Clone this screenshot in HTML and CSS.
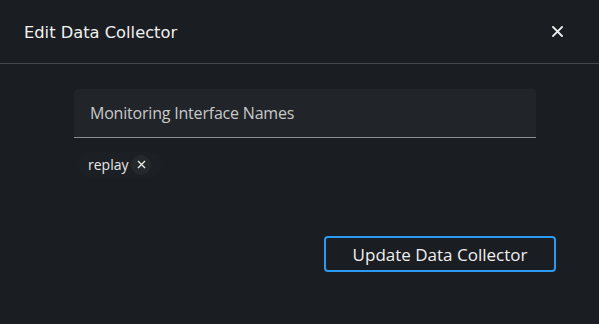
FILE: index.html
```html
<!DOCTYPE html>
<html>
<head>
<meta charset="utf-8">
<link rel="stylesheet" href="styles.css">
</head>
<body>
<div class="modal">
  <header class="modal-header">
    <h1 class="modal-title">Edit Data Collector</h1>
    <button class="close-btn" aria-label="Close">
      <svg width="11" height="11" viewBox="0 0 11 11"><path d="M1 1L10 10M10 1L1 10" stroke="#f0f0f0" stroke-width="1.8" stroke-linecap="square"/></svg>
    </button>
  </header>
  <main class="modal-body">
    <div class="field">
      <div class="input">Monitoring Interface Names</div>
      <div class="chips">
        <span class="chip">
          <span class="chip-text">replay</span>
          <span class="chip-close">
            <svg width="9" height="9" viewBox="0 0 9 9"><path d="M1 1L8 8M8 1L1 8" stroke="#e8e8e8" stroke-width="1.4"/></svg>
          </span>
        </span>
      </div>
    </div>
    <div class="actions">
      <button class="primary-btn">Update Data Collector</button>
    </div>
  </main>
</div>
</body>
</html>
```

FILE: styles.css
```css
html, body {
  margin: 0;
  padding: 0;
  background: #1a1d21;
  width: 599px;
  height: 324px;
  overflow: hidden;
}
body {
  font-family: "Open Sans", "Noto Sans", sans-serif;
  color: #e8e8e8;
}
.modal-header {
  height: 64px;
  box-sizing: border-box;
  display: flex;
  align-items: center;
  justify-content: space-between;
  padding: 0 36px 0 24px;
  border-bottom: 1px solid #45474b;
}
.modal-title {
  margin: 0;
  font-family: "DejaVu Sans", sans-serif;
  font-size: 16.3px;
  font-weight: normal;
  color: #f0f0f0;
  padding-top: 1px;
}
.close-btn {
  background: none;
  border: 0;
  padding: 0;
  width: 11px;
  height: 11px;
  display: flex;
}
.modal-body {
  padding: 25px 43px 0 74px;
}
.field {
  width: 462px;
}
.input {
  height: 49px;
  box-sizing: border-box;
  background: #212428;
  border-bottom: 1px solid #8a8d90;
  border-radius: 4px 4px 0 0;
  padding: 0 16px;
  display: flex;
  align-items: center;
  font-size: 16px;
  letter-spacing: -0.2px;
  color: #c9c9ca;
}
.chips {
  display: flex;
  padding: 14px 0 0 4px;
}
.chip {
  display: inline-flex;
  align-items: center;
  height: 25px;
  background: #1c1f23;
  border-radius: 13px;
  padding: 0 12px 0 10px;
}
.chip-text {
  font-size: 14px;
  color: #e8e8e8;
  margin-right: 3px;
}
.chip-close {
  width: 20px;
  height: 20px;
  border-radius: 50%;
  background: #24292c;
  display: flex;
  align-items: center;
  justify-content: center;
}
.actions {
  display: flex;
  justify-content: flex-end;
  margin-top: 59px;
}
.primary-btn {
  width: 232px;
  height: 36px;
  box-sizing: border-box;
  background: transparent;
  border: 2px solid #2b9af3;
  border-radius: 4px;
  font-family: "Open Sans", "Noto Sans", sans-serif;
  font-size: 17px;
  color: #f0f0f0;
  padding: 0;
}
```
